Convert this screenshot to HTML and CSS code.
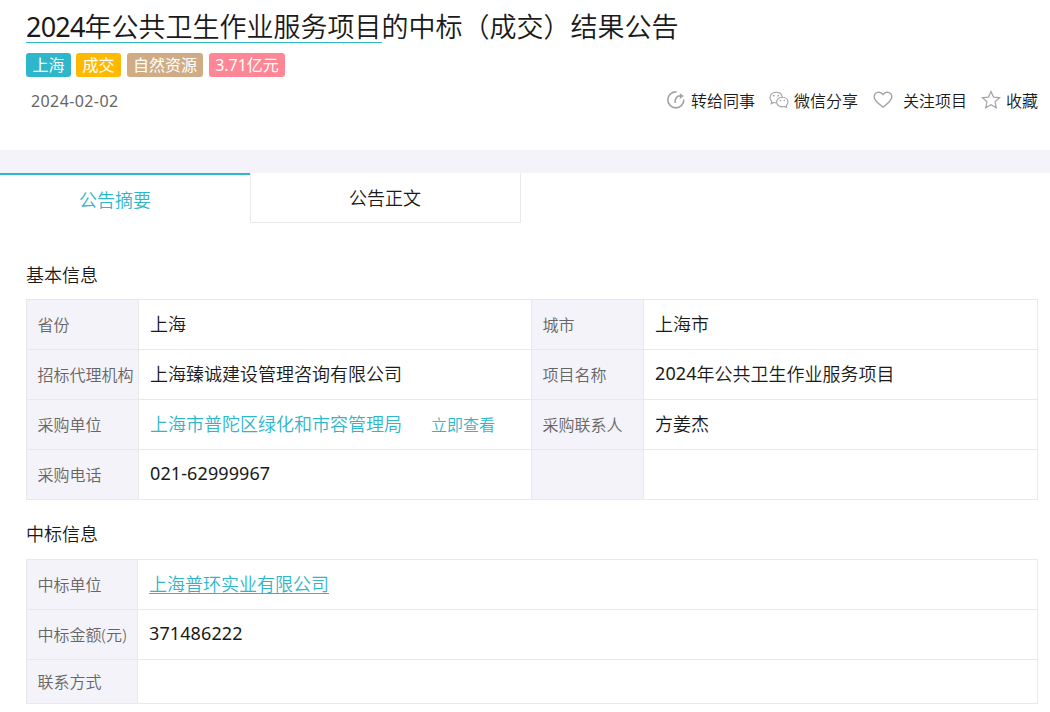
FILE: index.html
```html
<!DOCTYPE html>
<html lang="zh-CN">
<head>
<meta charset="utf-8">
<title>2024年公共卫生作业服务项目</title>
<link rel="stylesheet" href="styles.css">
</head>
<body>
<header class="header">
  <h1 class="title"><span class="project"><span class="title-year">2024</span>年公共卫生作业服务项目</span>的中标（成交）结果公告</h1>
  <div class="tags">
    <span class="tag tag-area">上海</span>
    <span class="tag tag-deal">成交</span>
    <span class="tag tag-field">自然资源</span>
    <span class="tag tag-amount">3.71亿元</span>
  </div>
  <div class="meta">
    <time class="date">2024-02-02</time>
    <div class="actions">
      <span class="action share"><svg class="icon" viewBox="0 0 20 20"><path d="M10.500 1.900A8 8 0 1 0 17.800 9.500" stroke-width="1.600"/><path d="M9.300 12.800c-.5-4.300 1-7 5.200-7" stroke-width="1.600"/><path d="M13.800 3.200 17.800 6l-4 2.900z" fill="#a3a3a8" stroke="none"/></svg>转给同事</span>
      <span class="action wechat"><svg class="icon" viewBox="0 0 20 20"><path d="M7.600 12.700c-1 .1-2 0-2.900-.3l-2.500 1.300.6-2.300C-.7 8.200 1.500 2.200 7 2.200c3.500 0 6 2.200 6.300 5"/><path d="M13.300 7.200c3.400 0 5.700 2.200 5.700 4.900 0 1.500-.7 2.700-1.800 3.600l.5 1.800-2.100-1c-4.100 1.200-8-.9-8-4.400 0-2.700 2.400-4.900 5.700-4.900z"/><circle class="dot" cx="4.800" cy="5.700" r=".9"/><circle class="dot" cx="9.300" cy="5.700" r=".9"/><circle class="dot" cx="11.500" cy="10.500" r=".8"/><circle class="dot" cx="15.300" cy="10.500" r=".8"/></svg>微信分享</span>
      <span class="action follow"><svg class="icon" viewBox="0 0 20 20"><path d="M10 17.200C5.500 13.700 1.200 10.500 1.200 6.900c0-5 6-6.300 8.800-2.300 2.800-4 8.800-2.700 8.800 2.300 0 3.600-4.300 6.800-8.800 10.300z" stroke-width="1.400"/></svg>关注项目</span>
      <span class="action collect"><svg class="icon" viewBox="0 0 20 20"><path d="m10 1.500 2.500 5.600 6.100.6-4.600 4.100 1.300 6-5.300-3.100-5.300 3.100 1.300-6-4.600-4.100 6.100-.6z" stroke-width="1.200"/></svg>收藏</span>
    </div>
  </div>
</header>
<nav class="tabs">
  <div class="tab tab-active">公告摘要</div>
  <div class="tab tab-plain">公告正文</div>
</nav>
<main class="content">
  <h2 class="heading">基本信息</h2>
  <div class="grid basic">
    <div class="label">省份</div><div class="value">上海</div>
    <div class="label">城市</div><div class="value">上海市</div>
    <div class="label">招标代理机构</div><div class="value">上海臻诚建设管理咨询有限公司</div>
    <div class="label">项目名称</div><div class="value"><span class="number">2024</span>年公共卫生作业服务项目</div>
    <div class="label">采购单位</div><div class="value"><a class="link">上海市普陀区绿化和市容管理局</a><a class="link view">立即查看</a></div>
    <div class="label">采购联系人</div><div class="value">方姜杰</div>
    <div class="label">采购电话</div><div class="value"><span class="number">021-62999967</span></div>
    <div class="label"></div><div class="value"></div>
  </div>
  <h2 class="heading heading-bid">中标信息</h2>
  <div class="grid bid">
    <div class="label">中标单位</div><div class="value"><a class="link company">上海普环实业有限公司</a></div>
    <div class="label">中标金额(元)</div><div class="value"><span class="number">371486222</span></div>
    <div class="label">联系方式</div><div class="value"></div>
  </div>
</main>
</body>
</html>
```
FILE: styles.css
```css
* { box-sizing: border-box; }
body {
  margin: 0;
  height: 712px;
  overflow: hidden;
  background: #fff;
  color: #1a1a1a;
  font-family: "Noto Sans", "Noto Sans CJK SC", sans-serif;
  font-weight: 350;
  font-size: 18px;
}
.header { height: 150px; padding: 9px 12px 0 26px; }
.title { margin: 0; font-size: 27px; line-height: 36px; height: 44px; font-weight: 350; white-space: nowrap; }
.project { display: inline-block; height: 34px; border-bottom: 1px solid #2eb6ca; vertical-align: top; }
.title-year { letter-spacing: -0.8px; font-weight: 400; }
.tags { display: flex; height: 24px; color: #fff; font-size: 16px; line-height: 24px; font-weight: 400; }
.tag { border-radius: 3px; text-align: center; white-space: nowrap; }
.tag-area { width: 45px; margin-right: 5px; background: #2eb6ca; }
.tag-deal { width: 45px; margin-right: 6px; background: #ffba00; }
.tag-field { width: 76px; margin-right: 6px; background: #d0ac86; }
.tag-amount { width: 76px; background: #ff8795; }
.meta { display: flex; justify-content: space-between; align-items: center; height: 48px; padding-left: 5px; font-size: 16px; }
.date { color: #666; letter-spacing: 0.4px; font-weight: 400; }
.actions { display: flex; }
.action { display: flex; align-items: center; white-space: nowrap; line-height: 24px; }
.icon { width: 20px; height: 20px; margin-right: 5px; margin-top: -2px; fill: none; stroke: #a3a3a8; stroke-width: 1.1; }
.dot { fill: #a3a3a8; stroke: none; }
.wechat { margin-left: 14px; }
.follow { margin-left: 15px; }
.follow .icon { margin-right: 10px; }
.collect { margin-left: 14px; }
.tabs { display: flex; height: 73px; border-top: 23px solid #f4f3f9; }
.tab { display: flex; justify-content: center; }
.tab-active { width: 250px; border-top: 2px solid #2eb6ca; color: #2eb6ca; padding: 12px 20px 0 0; line-height: 26px; }
.tab-plain { width: 271px; height: 50px; border: 1px solid #e9e9e9; border-top: 0; padding: 12px 1px 0 0; line-height: 26px; }
.content { padding: 38px 12px 0 26px; }
.heading { margin: 0; height: 38px; font-size: 18px; line-height: 28px; font-weight: 350; }
.heading-bid { height: 39px; margin-top: 20px; }
.grid { display: grid; width: 1012px; border: solid #e9e9e9; border-width: 1px 0 0 1px; }
.basic { grid-template-columns: 112px 393px 112px 394px; grid-auto-rows: 50px; }
.bid { grid-template-columns: 111px 900px; grid-template-rows: 50px 50px 44px; }
.label, .value { display: flex; align-items: center; border: solid #e9e9e9; border-width: 0 1px 1px 0; padding: 0 0 3px 11px; white-space: nowrap; }
.label { background: #f4f3f9; color: #666; font-size: 16px; padding: 0 0 1px 10.5px; }
.link { color: #2eb6ca; }
.view { margin-left: 29px; font-size: 16px; padding-top: 2px; }
.company { text-decoration: underline; text-underline-offset: 2px; text-decoration-thickness: 1px; }
.number { letter-spacing: 0.1px; font-weight: 400; }
```
